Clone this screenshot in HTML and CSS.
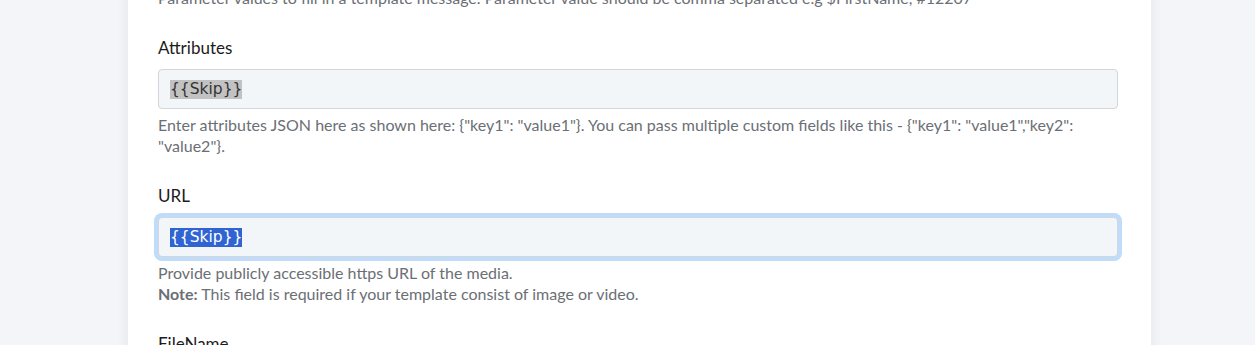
FILE: index.html
```html
<!DOCTYPE html>
<html lang="en">
<head>
    <meta charset="UTF-8">
    <meta name="viewport" content="width=device-width, initial-scale=1.0">
    <title>Template message fields</title>
    <link rel="stylesheet" href="styles.css">
</head>
<body>
    <div class="page">
        <div class="card">
            <div class="field">
                <p class="help first">Parameter values to fill in a template message. Parameter value should be comma separated e.g $FirstName, #12207</p>
            </div>

            <div class="field">
                <label class="label">Attributes</label>
                <div class="input"><span class="sel">{{Skip}}</span></div>
                <p class="help">Enter attributes JSON here as shown here: {"key1": "value1"}. You can pass multiple custom fields like this - {"key1": "value1","key2": "value2"}.</p>
            </div>

            <div class="field">
                <label class="label">URL</label>
                <div class="input focused"><span class="sel active">{{Skip}}</span></div>
                <p class="help">Provide publicly accessible https URL of the media.<br><b>Note:</b> This field is required if your template consist of image or video.</p>
            </div>

            <div class="field">
                <label class="label">FileName</label>
            </div>
        </div>
    </div>
</body>
</html>
```

FILE: styles.css
```css
:root {
    --page-bg: #f3f5f8;
    --card-bg: #fff;
    --label-color: #1c1c1c;
    --help-color: #6b6f75;
    --input-bg: #f3f6f9;
    --input-border: #d3d6da;
    --focus-ring: #bfdcfb;
}

body {
    margin: 0;
    background-color: var(--page-bg);
    font-family: 'Lato', sans-serif;
    overflow: hidden;
}

.page {
    display: flex;
    padding-left: 128px;
}

.card {
    background-color: var(--card-bg);
    width: 960px;
    margin-top: -13px;
    padding: 0 33px 0 30px;
    box-shadow: 0 0 12px rgba(30, 45, 70, 0.08);
}

.field {
    margin-bottom: 27px;
}

.label {
    display: block;
    color: var(--label-color);
    font-size: 17px;
    line-height: 26px;
    margin-bottom: 8px;
}

.input {
    box-sizing: border-box;
    height: 40px;
    background-color: var(--input-bg);
    border: 1px solid var(--input-border);
    border-radius: 4px;
    padding: 0 11px;
    display: flex;
    align-items: center;
    font-family: 'DejaVu Sans', sans-serif;
    font-size: 15.5px;
    color: #333;
}

.input.focused {
    box-shadow: 0 0 0 4px var(--focus-ring);
}

.sel {
    background-color: #c2c2c2;
    line-height: 19px;
}

.sel.active {
    background-color: #3064d3;
    color: #fff;
}

.help {
    margin: 5px 0 0;
    color: var(--help-color);
    font-size: 16px;
    line-height: 21px;
}

.help.first {
    margin-top: 0;
}

.help b {
    font-weight: 700;
}
```
